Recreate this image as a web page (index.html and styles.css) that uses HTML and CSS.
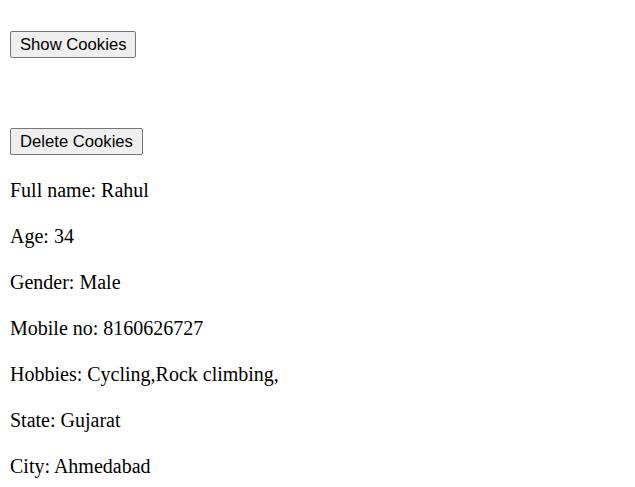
FILE: index.html
```html
<!DOCTYPE html>
<html>
<head>
<meta charset="utf-8">
<link rel="stylesheet" href="styles.css">
</head>
<body>
<div class="actions">
  <button class="btn" type="button">Show Cookies</button>
  <button class="btn" type="button">Delete Cookies</button>
</div>
<div class="info">
  <p>Full name: Rahul</p>
  <p>Age: 34</p>
  <p>Gender: Male</p>
  <p>Mobile no: 8160626727</p>
  <p>Hobbies: Cycling,Rock climbing,</p>
  <p>State: Gujarat</p>
  <p>City: Ahmedabad</p>
</div>
</body>
</html>
```
FILE: styles.css
```css
html, body {
  margin: 0;
  background: #fff;
}
body {
  padding: 31px 10px 0;
  font-family: "Liberation Serif", "Times New Roman", serif;
  color: #000;
}
.actions {
  display: flex;
  flex-direction: column;
  align-items: flex-start;
  gap: 70px;
}
.btn {
  box-sizing: border-box;
  height: 27px;
  margin: 0;
  padding: 0 9px;
  font-family: "Liberation Sans", Arial, sans-serif;
  font-size: 16.67px;
  line-height: 19px;
  color: #000;
  background: #efefef;
  border: 1px solid #767676;
  border-radius: 2px;
}
.info {
  margin-top: 22px;
  display: flex;
  flex-direction: column;
  gap: 20px;
}
.info p {
  margin: 0;
  font-size: 20px;
  line-height: 26px;
}
```
